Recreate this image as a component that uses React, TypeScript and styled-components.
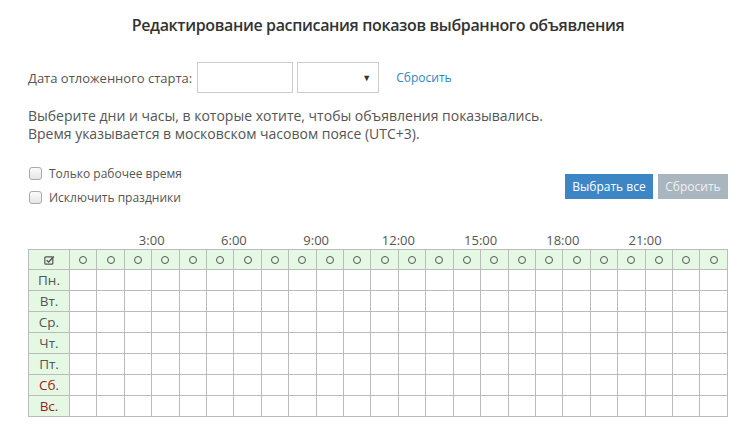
import React from "react";
import styled, { createGlobalStyle } from "styled-components";

const GlobalStyle = createGlobalStyle`
  body {
    margin: 0;
    background: #fff;
    font-family: "Open Sans", "Liberation Sans", sans-serif;
    color: #555;
  }
`;

const DAYS = [
  { name: "Пн.", weekend: false },
  { name: "Вт.", weekend: false },
  { name: "Ср.", weekend: false },
  { name: "Чт.", weekend: false },
  { name: "Пт.", weekend: false },
  { name: "Сб.", weekend: true },
  { name: "Вс.", weekend: true },
];

const HOURS = Array.from({ length: 24 }, (_, i) => i);

// label row: [colSpan, text] — a label spans the two cells around its 3-hour line
const LABELS: [number, string][] = [
  [2, ""],
  [2, "3:00"],
  [1, ""],
  [2, "6:00"],
  [1, ""],
  [2, "9:00"],
  [1, ""],
  [2, "12:00"],
  [1, ""],
  [2, "15:00"],
  [1, ""],
  [2, "18:00"],
  [1, ""],
  [2, "21:00"],
  [2, ""],
];

function CheckSquare() {
  return (
    <svg width="11" height="10" viewBox="0 0 11 10" fill="none">
      <rect x="0.8" y="1.8" width="8" height="7.4" rx="1" stroke="#555" strokeWidth="1.2" />
      <path d="M2.6 5.2 L4.6 7 L9.8 1.4" stroke="#555" strokeWidth="1.4" />
    </svg>
  );
}

export default function App() {
  return (
    <Page>
      <GlobalStyle />
      <Title>Редактирование расписания показов выбранного объявления</Title>

      <StartRow>
        <Label>Дата отложенного старта:</Label>
        <DateInput />
        <Select>
          <Arrow>▼</Arrow>
        </Select>
        <Link>Сбросить</Link>
      </StartRow>

      <Hint>
        Выберите дни и часы, в которые хотите, чтобы объявления показывались.
        <br />
        Время указывается в московском часовом поясе (UTC+3).
      </Hint>

      <Controls>
        <Checks>
          <CheckRow>
            <Box />
            <span>Только рабочее время</span>
          </CheckRow>
          <CheckRow>
            <Box />
            <span>Исключить праздники</span>
          </CheckRow>
        </Checks>
        <Buttons>
          <Button $variant="primary" $w={88}>
            Выбрать все
          </Button>
          <Button $variant="muted" $w={70}>
            Сбросить
          </Button>
        </Buttons>
      </Controls>

      <Grid>
        <colgroup>
          <col style={{ width: 41 }} />
          {HOURS.map((h) => (
            <col key={h} />
          ))}
        </colgroup>
        <thead>
          <tr>
            <LabelCell />
            {LABELS.map(([span, text], i) => (
              <LabelCell key={i} colSpan={span}>
                {text}
              </LabelCell>
            ))}
          </tr>
          <tr>
            <HeadCell>
              <CheckSquare />
            </HeadCell>
            {HOURS.map((h) => (
              <HeadCell key={h} $mark={h > 0 && h % 3 === 0}>
                <Ring />
              </HeadCell>
            ))}
          </tr>
        </thead>
        <tbody>
          {DAYS.map((d) => (
            <tr key={d.name}>
              <DayCell $weekend={d.weekend}>{d.name}</DayCell>
              {HOURS.map((h) => (
                <Cell key={h} $mark={h > 0 && h % 3 === 0} />
              ))}
            </tr>
          ))}
        </tbody>
      </Grid>
    </Page>
  );
}

const Page = styled.div`
  width: 756px;
  padding: 0 28px;
  box-sizing: border-box;
`;

const Title = styled.h1`
  margin: 0;
  padding-top: 13px;
  font-size: 16px;
  font-weight: 600;
  letter-spacing: -0.35px;
  color: #333;
  text-align: center;
  line-height: 24px;
`;

const StartRow = styled.div`
  display: flex;
  align-items: center;
  gap: 4px;
  margin-top: 25px;
  height: 31px;
`;

const Label = styled.span`
  font-size: 13px;
  color: #555;
  margin-right: 1px;
`;

const DateInput = styled.div`
  width: 94px;
  height: 29px;
  border: 1px solid #ccc;
`;

const Select = styled.div`
  width: 73px;
  height: 29px;
  border: 1px solid #ccc;
  display: flex;
  align-items: center;
  justify-content: flex-end;
  padding-right: 7px;
`;

const Arrow = styled.span`
  font-size: 9px;
  color: #333;
`;

const Link = styled.span`
  margin-left: 13px;
  font-size: 12px;
  color: #2a8ac4;
`;

const Hint = styled.p`
  margin: 14px 0 0;
  font-size: 14px;
  line-height: 18px;
  color: #555;
`;

const Controls = styled.div`
  display: flex;
  align-items: center;
  justify-content: space-between;
  margin-top: 21px;
`;

const Checks = styled.div`
  display: flex;
  flex-direction: column;
  gap: 6px;
`;

const CheckRow = styled.label`
  display: flex;
  align-items: center;
  gap: 7px;
  font-size: 12px;
  color: #555;
  height: 18px;
`;

const Box = styled.span`
  width: 11px;
  height: 11px;
  margin-left: 1px;
  border: 1px solid #aaa;
  border-radius: 3px;
  background: linear-gradient(#fafafa, #e6e6e6);
`;

const Buttons = styled.div`
  display: flex;
  gap: 5px;
  margin-top: 3px;
`;

const Button = styled.button<{ $variant: "primary" | "muted"; $w: number }>`
  width: ${(p) => p.$w}px;
  height: 25px;
  padding: 0;
  border: none;
  font-family: inherit;
  font-size: 12px;
  color: ${(p) => (p.$variant === "primary" ? "#fff" : "#eef1f3")};
  background: ${(p) => (p.$variant === "primary" ? "#3d86c6" : "#a9b6bf")};
`;

const Grid = styled.table`
  margin-top: 26px;
  width: 700px;
  table-layout: fixed;
  border-collapse: collapse;
`;

const LabelCell = styled.th`
  padding: 0;
  height: 17px;
  font-size: 13px;
  font-weight: 400;
  color: #555;
  text-align: center;
  line-height: 17px;
`;

const HeadCell = styled.td<{ $mark?: boolean }>`
  height: 19px;
  padding: 0;
  border: 1px solid #bbb;
  border-left: ${(p) => (p.$mark ? "1px solid #000" : "1px solid #bbb")};
  background: #e4f8e4;
  text-align: center;
  vertical-align: middle;
  line-height: 0;

  svg {
    display: inline-block;
  }
`;

const Ring = styled.span`
  display: inline-block;
  width: 6px;
  height: 6px;
  border: 1.4px solid #555;
  border-radius: 50%;
`;

const DayCell = styled.td<{ $weekend: boolean }>`
  height: 20px;
  padding: 0;
  border: 1px solid #bbb;
  background: #e4f8e4;
  text-align: center;
  font-size: 13.5px;
  color: ${(p) => (p.$weekend ? "#9b1c1c" : "#555")};
`;

const Cell = styled.td<{ $mark?: boolean }>`
  height: 20px;
  padding: 0;
  border: 1px solid #bbb;
  border-left: ${(p) => (p.$mark ? "1px solid #000" : "1px solid #bbb")};
  background: #fff;
`;
